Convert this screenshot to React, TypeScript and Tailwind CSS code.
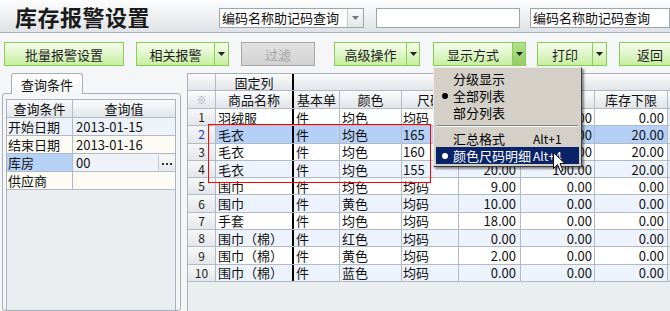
import React from 'react'

const rows = [
  { n: 1, name: '羽绒服', color: '均色', size: '均码', a: '', b: '0.00', min: '0.00' },
  { n: 2, name: '毛衣', color: '均色', size: '165', a: '', b: '100.00', min: '20.00' },
  { n: 3, name: '毛衣', color: '均色', size: '160', a: '', b: '100.00', min: '20.00' },
  { n: 4, name: '毛衣', color: '均色', size: '155', a: '20.00', b: '100.00', min: '20.00' },
  { n: 5, name: '围巾', color: '均色', size: '均码', a: '9.00', b: '0.00', min: '0.00' },
  { n: 6, name: '围巾', color: '黄色', size: '均码', a: '10.00', b: '0.00', min: '0.00' },
  { n: 7, name: '手套', color: '均色', size: '均码', a: '18.00', b: '0.00', min: '0.00' },
  { n: 8, name: '围巾（棉）', color: '红色', size: '均码', a: '0.00', b: '0.00', min: '0.00' },
  { n: 9, name: '围巾（棉）', color: '黄色', size: '均码', a: '2.00', b: '0.00', min: '0.00' },
  { n: 10, name: '围巾（棉）', color: '蓝色', size: '均码', a: '0.00', b: '0.00', min: '0.00' },
]

function Arrow({ color = '#222' }: { color?: string }) {
  return (
    <svg width="7" height="4" viewBox="0 0 7 4">
      <polygon points="0,0 7,0 3.5,4" fill={color} />
    </svg>
  )
}

function GreenBtn({ label, w, aw, pressed }: { label: string; w: string; aw?: string; pressed?: boolean }) {
  return (
    <div className="flex h-[24px] shrink-0 border border-[#86cf50]">
      <div className={`${w} flex items-center justify-center bg-gradient-to-b from-[#f6fdee] to-[#c7eea0] text-[13px] text-[#1e1e1e] leading-none`}>
        {label}
      </div>
      {aw && (
        <div
          className={`${aw} flex items-center justify-center border-l border-[#86cf50] ${
            pressed ? 'bg-gradient-to-b from-[#b3e08a] to-[#96cc66]' : 'bg-gradient-to-b from-[#f6fdee] to-[#c7eea0]'
          }`}
        >
          <Arrow />
        </div>
      )}
    </div>
  )
}

function MenuItem({ label, shortcut, bullet, active }: { label: string; shortcut?: string; bullet?: boolean; active?: boolean }) {
  return (
    <div className={`relative h-[17px] flex items-center leading-none ${active ? 'bg-[#0a246a] text-white' : 'text-black'}`}>
      {bullet && (
        <span className={`absolute left-[6px] top-[6px] w-[6px] h-[6px] rounded-full ${active ? 'bg-white' : 'bg-black'}`} />
      )}
      <span className="pl-[17px] w-[97px] shrink-0">{label}</span>
      {shortcut && <span className="text-[12px]">{shortcut}</span>}
    </div>
  )
}

export default function App() {
  const line = 'border-[#b1bac5]'
  const head = 'bg-gradient-to-b from-[#fafbfc] to-[#e1e5e9]'

  return (
    <div className="w-[670px] h-[311px] overflow-hidden relative bg-[#f4f6f8] font-[family-name:Noto_Sans_CJK_SC,sans-serif] text-[13px] text-[#111]">
      {/* 顶部标题栏 */}
      <div className="h-[33px] flex items-center bg-gradient-to-b from-[#fdfdfd] to-[#dfe3e7] border-b border-[#a9b1b9]">
        <div className="w-[226px] pl-[15px] text-[22px] font-bold leading-none text-[#1a1a1a] tracking-[0.5px]">库存报警设置</div>
        <div className="w-[150px] h-[20px] mt-[3px] flex bg-white border border-[#9da6ae]">
          <div className="flex-1 pl-[2px] flex items-center leading-none">编码名称助记码查询</div>
          <div className="w-[16px] border-l border-[#c5cbd0] bg-gradient-to-b from-[#fafafa] to-[#e4e6e8] flex items-center justify-center">
            <Arrow color="#777" />
          </div>
        </div>
        <div className="ml-[12px] w-[149px] h-[20px] mt-[3px] bg-white border border-[#9da6ae]" />
        <div className="ml-[10px] w-[140px] h-[20px] mt-[3px] bg-white border border-[#9da6ae] pl-[2px] flex items-center leading-none shrink-0">
          编码名称助记码查询
        </div>
      </div>

      {/* 工具栏 */}
      <div className="h-[37px] flex items-start pt-[9px] pl-[4px]">
        <GreenBtn label="批量报警设置" w="w-[118px]" />
        <div className="ml-[12px]">
          <GreenBtn label="相关报警" w="w-[77px]" aw="w-[14px]" />
        </div>
        <div className="ml-[12px] w-[74px] h-[24px] shrink-0 border border-[#a7a7a7] bg-gradient-to-b from-[#e2e2e2] to-[#d2d2d2] flex items-center justify-center text-[#a2a2a2] leading-none">
          过滤
        </div>
        <div className="ml-[19px]">
          <GreenBtn label="高级操作" w="w-[71px]" aw="w-[13px]" />
        </div>
        <div className="ml-[13px]">
          <GreenBtn label="显示方式" w="w-[78px]" aw="w-[13px]" pressed />
        </div>
        <div className="ml-[11px]">
          <GreenBtn label="打印" w="w-[54px]" aw="w-[14px]" />
        </div>
        <div className="ml-[12px]">
          <GreenBtn label="返回" w="w-[60px]" />
        </div>
      </div>

      {/* 主体 */}
      <div className="flex h-[241px]">
        {/* 左侧查询条件 */}
        <div className="ml-[2px] w-[179px] flex flex-col pt-[3px] shrink-0">
          <div className="relative z-10 -mb-px ml-[9px] w-[72px] h-[21px] border border-b-0 border-[#a7b0ba] rounded-t-[3px] bg-gradient-to-b from-white to-[#f4f6f8] flex items-center justify-center leading-none">
            查询条件
          </div>
          <div className="flex-1 border border-[#a7b0ba] rounded-[3px] bg-[#f4f6f8] pt-[5px] pl-[3px] pr-[4px]">
            <div className="h-full border-x border-t border-[#aab3bd] bg-[#ebeef1]">
              <div className={`flex h-[18px] border-b ${line} ${head} leading-none`}>
                <div className={`w-[66px] shrink-0 border-r ${line} flex items-center justify-center`}>查询条件</div>
                <div className="flex-1 flex items-center justify-center">查询值</div>
              </div>
              <div className={`flex h-[18px] border-b ${line} bg-[#eef2f9] leading-none`}>
                <div className={`w-[66px] shrink-0 border-r ${line} pl-[1px] flex items-center`}>开始日期</div>
                <div className="flex-1 pl-[3px] flex items-center">2013-01-15</div>
              </div>
              <div className={`flex h-[18px] border-b ${line} bg-[#fbfbf3] leading-none`}>
                <div className={`w-[66px] shrink-0 border-r ${line} pl-[1px] flex items-center`}>结束日期</div>
                <div className="flex-1 pl-[3px] flex items-center">2013-01-16</div>
              </div>
              <div className={`flex h-[18px] border-b ${line} leading-none`}>
                <div className={`w-[66px] shrink-0 border-r ${line} pl-[1px] flex items-center bg-[#b5d1f6]`}>库房</div>
                <div className="flex-1 min-w-0 pl-[3px] flex items-center bg-[#eef2f9]">00</div>
                <div className="w-[17px] shrink-0 my-[1px] border-l border-[#c6ccd2] bg-gradient-to-b from-[#fafafa] to-[#e6e8ea] flex items-center justify-center gap-[2px] pt-[2px]">
                  <span className="w-[2px] h-[2px] bg-[#333]" />
                  <span className="w-[2px] h-[2px] bg-[#333]" />
                  <span className="w-[2px] h-[2px] bg-[#333]" />
                </div>
              </div>
              <div className={`flex h-[18px] border-b ${line} bg-[#fbfbf3] leading-none`}>
                <div className={`w-[66px] shrink-0 border-r ${line} pl-[1px] flex items-center`}>供应商</div>
                <div className="flex-1" />
              </div>
            </div>
          </div>
        </div>

        {/* 右侧表格 */}
        <div className="ml-[6px] mt-[3px] w-[483px] border-l border-t border-[#a9b2bc] bg-[#ebeef1] flex flex-col leading-none">
          <div className={`flex h-[17px] border-b ${line} ${head}`}>
            <div className={`w-[28px] shrink-0 border-r ${line}`} />
            <div className="w-[76px] shrink-0 flex items-center justify-center">固定列</div>
            <div className="w-[2px] shrink-0 bg-black" />
            <div className="flex-1" />
          </div>
          <div className={`flex h-[18px] border-b ${line} ${head}`}>
            <div className={`w-[28px] shrink-0 border-r ${line} flex items-center justify-center text-[#9aa0a6] text-[10px]`}>※</div>
            <div className="w-[76px] shrink-0 flex items-center justify-center">商品名称</div>
            <div className="w-[2px] shrink-0 bg-black" />
            <div className={`w-[46px] shrink-0 border-r ${line} flex items-center justify-center`}>基本单</div>
            <div className={`w-[62px] shrink-0 border-r ${line} flex items-center justify-center`}>颜色</div>
            <div className={`w-[57px] shrink-0 border-r ${line} flex items-center justify-center`}>尺码</div>
            <div className={`w-[62px] shrink-0 border-r ${line}`} />
            <div className={`w-[74px] shrink-0 border-r ${line}`} />
            <div className={`w-[73px] shrink-0 border-r ${line} flex items-center justify-center`}>库存下限</div>
            <div className="flex-1" />
          </div>
          {rows.map((r) => {
            const bg = r.n === 2 ? 'bg-[#b5d0f6]' : r.n % 2 === 0 ? 'bg-[#edf3fc]' : 'bg-white'
            return (
              <div key={r.n} className={`flex h-[17.3px] border-b ${line} ${bg}`}>
                <div
                  className={`w-[28px] shrink-0 border-r ${line} bg-gradient-to-b from-[#f6f7f8] to-[#e3e6ea] flex items-center justify-center text-[12px] ${
                    r.n === 2 ? 'text-[#2233dd]' : 'text-[#222]'
                  }`}
                >
                  {r.n}
                </div>
                <div className="w-[76px] shrink-0 pl-[2px] flex items-center">{r.name}</div>
                <div className="w-[2px] shrink-0 bg-black" />
                <div className={`w-[46px] shrink-0 border-r ${line} pl-[2px] flex items-center`}>件</div>
                <div className={`w-[62px] shrink-0 border-r ${line} pl-[2px] flex items-center`}>{r.color}</div>
                <div className={`w-[57px] shrink-0 border-r ${line} pl-[1px] flex items-center`}>{r.size}</div>
                <div className={`w-[62px] shrink-0 border-r ${line} pr-[4px] flex items-center justify-end`}>{r.a}</div>
                <div className={`w-[74px] shrink-0 border-r ${line} pr-[2px] flex items-center justify-end`}>{r.b}</div>
                <div className={`w-[73px] shrink-0 border-r ${line} pr-[3px] flex items-center justify-end`}>{r.min}</div>
                <div className="flex-1 bg-[#ebeef1]" />
              </div>
            )
          })}
          <div className="flex-1" />
        </div>
      </div>

      {/* 红色标注框 */}
      <div className="absolute left-[208px] top-[124px] w-[223px] h-[59px] border border-[#ff0000]" />

      {/* 显示方式下拉菜单 */}
      <div className="absolute left-[433px] top-[67px] w-[149px] h-[100px] bg-[#d4d0c8] border border-t-[#eeeae4] border-l-[#eeeae4] border-r-[#404040] border-b-[#404040] shadow-[2px_2px_2px_rgba(0,0,0,0.45)] p-[2px]">
        <MenuItem label="分级显示" />
        <MenuItem label="全部列表" bullet />
        <MenuItem label="部分列表" />
        <div className="h-[9px] flex items-center px-[1px]">
          <div className="w-full border-t border-[#808080] border-b border-b-white" />
        </div>
        <MenuItem label="汇总格式" shortcut="Alt+1" />
        <MenuItem label="颜色尺码明细" shortcut="Alt+4" bullet active />
      </div>

      {/* 鼠标指针 */}
      <svg className="absolute left-[553px] top-[152px]" width="13" height="21" viewBox="0 0 13 21">
        <path d="M0.5 0.5 L0.5 16.5 L4.5 12.5 L7.5 19.5 L10 18.5 L7 11.5 L12 11.5 Z" fill="white" stroke="black" strokeWidth="1" />
      </svg>
    </div>
  )
}
